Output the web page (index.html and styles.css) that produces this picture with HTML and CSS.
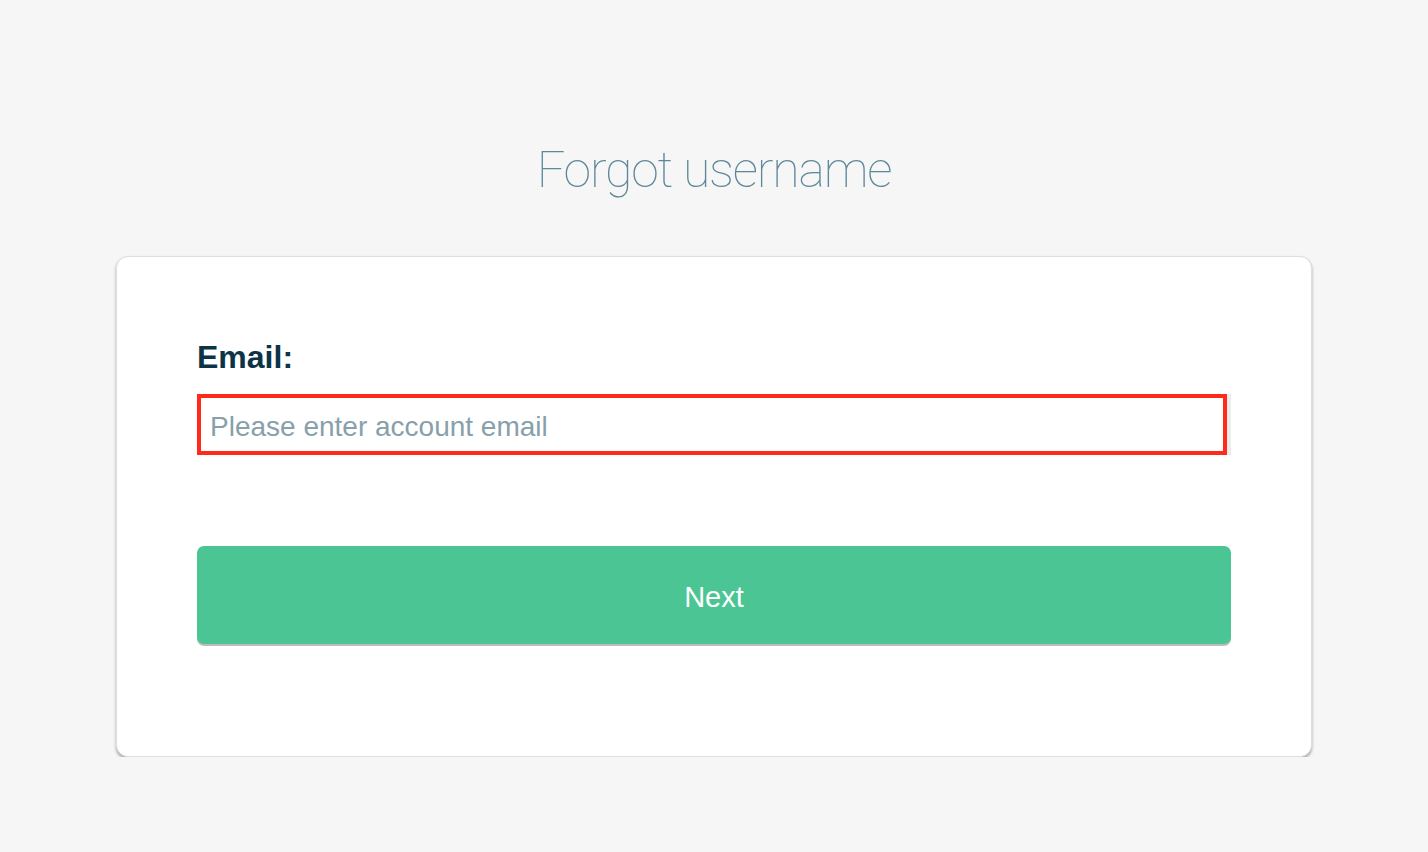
FILE: index.html
```html
<!DOCTYPE html>
<html lang="en">
<head>
<meta charset="utf-8">
<title>Forgot username</title>
<link rel="stylesheet" href="styles.css">
</head>
<body>
<main class="page">
  <h1 class="title">Forgot username</h1>
  <section class="card">
    <form class="form">
      <label class="label" for="email">Email:</label>
      <input class="input" id="email" type="email" placeholder="Please enter account email">
      <button class="btn" type="button">Next</button>
    </form>
  </section>
</main>
</body>
</html>
```
FILE: styles.css
```css
html, body {
  margin: 0;
  padding: 0;
  background: #f6f6f6;
}
body {
  font-family: "Liberation Sans", Arial, sans-serif;
}
.page {
  padding-top: 140px;
  display: flex;
  flex-direction: column;
  align-items: center;
}
.title {
  margin: 0 0 56px 0;
  font-family: "Roboto", "Liberation Sans", sans-serif;
  font-weight: 100;
  font-size: 50px;
  line-height: 60px;
  color: #5d8899;
  letter-spacing: -1.2px;
}
.card {
  box-sizing: border-box;
  width: 1196px;
  align-self: flex-start;
  margin-left: 116px;
  background: #ffffff;
  border: 1px solid #dedede;
  border-radius: 12px;
  box-shadow: 0 2px 3px rgba(0,0,0,0.33);
  padding: 82px 80px 110px 80px;
}
.form {
  display: flex;
  flex-direction: column;
}
.label {
  font-weight: 700;
  font-size: 32px;
  line-height: 36px;
  color: #0d3446;
  margin-bottom: 19px;
}
.input {
  box-sizing: border-box;
  width: 1030px;
  height: 61px;
  border: 4px solid #ff2a1a;
  border-radius: 0;
  box-shadow: 4px 0 0 #ececec;
  padding: 4px 9px 0 9px;
  font-family: "Liberation Sans", Arial, sans-serif;
  font-size: 28px;
  color: #333;
  outline: none;
  background: #fff;
  margin: 0 0 91px 0;
}
.input::placeholder {
  color: #87a0ab;
}
.btn {
  box-sizing: border-box;
  width: 1034px;
  height: 98px;
  border: none;
  border-radius: 7px;
  background: #4bc593;
  box-shadow: 0 2px 0 #bdbdbd;
  color: #ffffff;
  font-family: "Liberation Sans", Arial, sans-serif;
  font-size: 29px;
  cursor: pointer;
  padding: 4px 0 0 0;
  margin-bottom: 2px;
}
```
